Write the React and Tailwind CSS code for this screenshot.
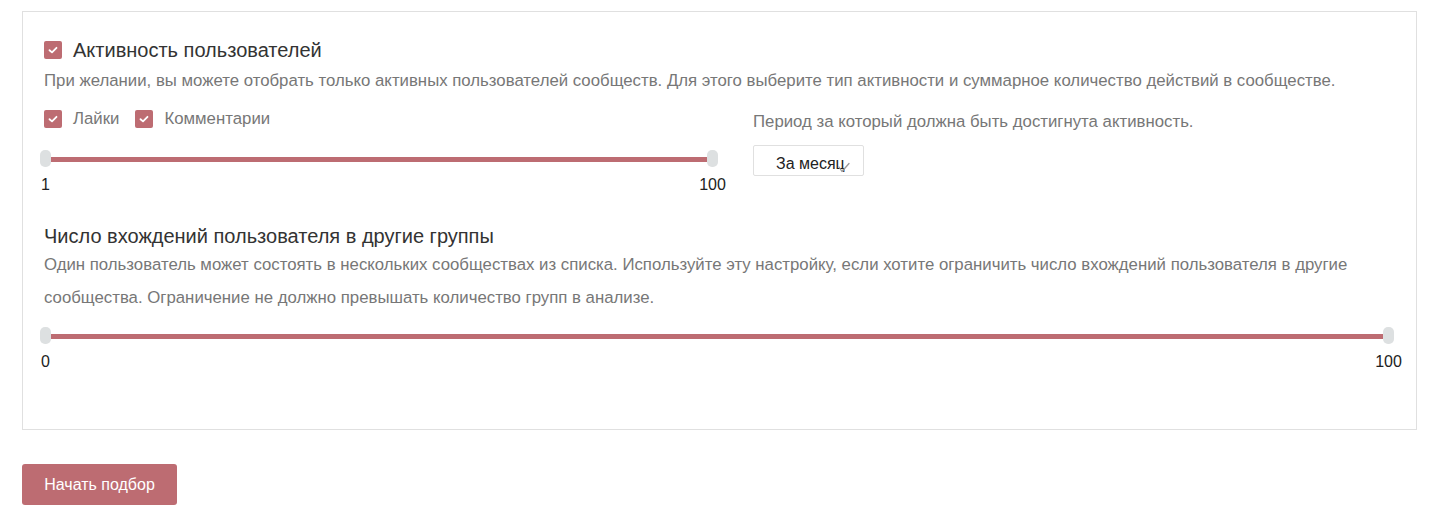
import React from "react";

const font = { fontFamily: '"Liberation Sans", Arial, sans-serif' };

function Check({ className = "" }) {
  return (
    <span className={`flex h-[18px] w-[18px] shrink-0 items-center justify-center rounded-[2px] bg-[#bd6c72] ${className}`}>
      <svg width="10" height="8" viewBox="0 0 10 8" fill="none">
        <path d="M1.5 4.2 L4 6.4 L8.5 1.8" stroke="white" strokeWidth="1.8" strokeLinecap="round" strokeLinejoin="round" />
      </svg>
    </span>
  );
}

function Slider({ min, max }) {
  return (
    <div>
      <div className="relative h-[17px] w-full">
        <div className="absolute left-[6px] right-[6px] top-[7px] h-[5px] bg-[#bd6c72]" />
        <div className="absolute left-0 top-0 h-[17px] w-[11px] rounded-[5px] bg-[#dde0e1]" />
        <div className="absolute right-0 top-0 h-[17px] w-[11px] rounded-[5px] bg-[#dde0e1]" />
      </div>
      <div className="mt-[8px] flex justify-between text-[16px] leading-[20px] text-[#222]">
        <span className="w-[11px] text-center">{min}</span>
        <span className="flex w-[11px] justify-center whitespace-nowrap">{max}</span>
      </div>
    </div>
  );
}

export default function App() {
  return (
    <div className="min-h-[522px] bg-white px-[22px] pt-[11px]" style={font}>
      <div className="w-[1395px] border border-[#e0e0e0] pb-[57px] pl-[21px] pr-[21px] pt-[29px]">
        <div className="flex h-[18px] items-center">
          <Check />
          <span className="ml-[11px] text-[20px] leading-[18px] text-[#333]">Активность пользователей</span>
        </div>
        <p className="mt-[12px] text-[16.8px] leading-[20px] text-[#777]">
          При желании, вы можете отобрать только активных пользователей сообществ. Для этого выберите тип активности и суммарное количество действий в сообществе.
        </p>

        <div className="mt-[19px] flex">
          <div className="w-[683px]">
            <div className="flex h-[18px] items-center text-[16.8px] text-[#777]">
              <Check />
              <span className="ml-[11px]">Лайки</span>
              <Check className="ml-[16px]" />
              <span className="ml-[11px]">Комментарии</span>
            </div>
            <div className="mt-[22px] ml-[-4px] w-[678px]">
              <Slider min="1" max="100" />
            </div>
          </div>
          <div className="ml-[26px] pt-[2px]">
            <div className="text-[16.8px] leading-[20px] text-[#777]">Период за который должна быть достигнута активность.</div>
            <div className="relative mt-[13px] h-[31px] w-[111px] rounded-[2px] border border-[#e0e0e0] bg-white pl-[22px] pt-[8px] text-[16px] leading-[20px] text-[#222]">
              За месяц
              <svg className="absolute left-[84px] top-[16px]" width="12" height="11" viewBox="0 0 12 11" fill="none">
                <path d="M1 5 L4 9.5 L11 1.5" stroke="#9a9a9a" strokeWidth="1.3" strokeLinecap="round" strokeLinejoin="round" />
              </svg>
            </div>
          </div>
        </div>

        <div className="mt-[29px] text-[20px] leading-[24px] text-[#333]">Число вхождений пользователя в другие группы</div>
        <p className="text-[16.8px] leading-[33px] text-[#777]">
          Один пользователь может состоять в нескольких сообществах из списка. Используйте эту настройку, если хотите ограничить число вхождений пользователя в другие сообщества. Ограничение не должно превышать количество групп в анализе.
        </p>
        <div className="mt-[13px] ml-[-4px] w-[1354px]">
          <Slider min="0" max="100" />
        </div>
      </div>

      <button className="mt-[34px] h-[41px] w-[155px] rounded-[3px] bg-[#bd6c72] text-[16px] text-white">
        Начать подбор
      </button>
    </div>
  );
}
